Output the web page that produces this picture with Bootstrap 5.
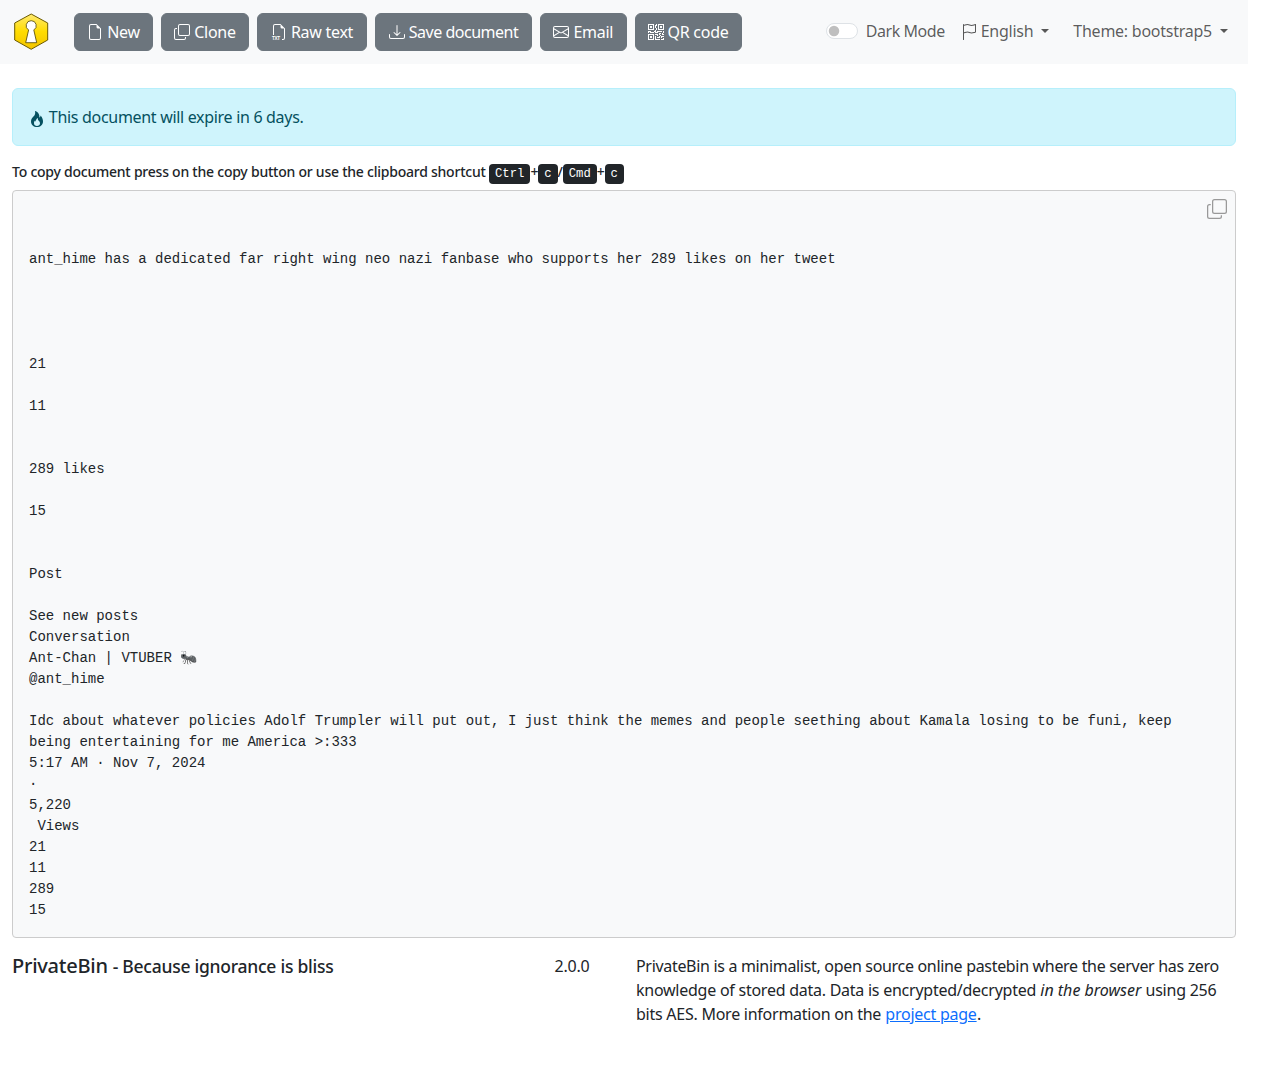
<!doctype html>
<html lang="en"><head><meta charset="utf-8"><title>PrivateBin</title>
<link href="https://cdn.jsdelivr.net/npm/bootstrap@5.3.0/dist/css/bootstrap.min.css" rel="stylesheet">
<style>
body{font-family:"Noto Sans",sans-serif;letter-spacing:-.25px;color:#212529}
.pb-shell{width:1248px}
.pb-nav{height:64px;padding:0 12px 0 14px;background:#f8f9fa}
.pb-logo{width:36px;height:38px;margin-right:24px;display:block}
.pb-actions .btn{height:38px;display:inline-flex;align-items:center;justify-content:center;gap:4px;padding:6px 0;white-space:nowrap;letter-spacing:-.27px}
.pb-actions .pb-tight{letter-spacing:-.48px}
.pb-actions .btn:nth-child(1){width:79px}
.pb-actions .btn:nth-child(2){width:88px}
.pb-actions .btn:nth-child(3){width:110px}
.pb-actions .btn:nth-child(4){width:157px}
.pb-actions .btn:nth-child(5){width:86.5px}
.pb-actions .btn:nth-child(6){width:107px}
.pb-actions svg{width:16px;height:16px;fill:currentColor;flex:none}
.pb-right{color:rgba(0,0,0,.65);margin-top:-2px}
.pb-right .nav-link{color:rgba(0,0,0,.65);padding:8px;white-space:nowrap}
.pb-right .dropdown-toggle::after{margin-left:8px}
.pb-right svg{width:16px;height:16px;fill:currentColor;vertical-align:-3px}
.pb-right .form-check{margin:0 8px 0 0;min-height:24px}
.pb-right .form-check-label{color:rgba(0,0,0,.65);letter-spacing:-.45px}
.pb-gap{margin-left:8px}
.pb-alert{margin:24px 12px 16px;height:58px;padding:16px;background:#cff4fc;border-color:#b6effb;color:#055160;letter-spacing:-.31px}
.pb-alert svg{width:16px;height:16px;fill:currentColor;vertical-align:-4px}
.pb-hint{margin:0 12px 6px;height:22px;font-size:14px;font-weight:500;line-height:20px;white-space:nowrap;color:#212529;letter-spacing:-.235px}
.pb-hint kbd{letter-spacing:0;font-family:"Liberation Mono",monospace}
.pb-paste{margin:0 12px 16px}
.pb-paste pre{margin:0;padding:16px;background:#f8f9fa;border:1px solid #ccc;border-radius:4px;font:14px/21px "Liberation Mono",monospace;letter-spacing:0;white-space:pre-wrap;color:#212529}
.pb-copy{position:absolute;top:9px;right:9px;width:20px;height:20px;fill:#999}
.pb-title{font-size:20px;font-weight:500;line-height:24px;margin:0}
.pb-title small{font-size:17.5px;font-weight:500}
.pb-line1{letter-spacing:-.317px}
footer em{letter-spacing:0;margin:0 .3px}
footer a{margin:0 .3px}
</style></head>
<body>
<div class="pb-shell">
<nav class="navbar navbar-expand pb-nav">
  <svg class="pb-logo" viewBox="0 0 36 38" role="img" aria-label="PrivateBin logo">
    <defs><linearGradient id="pbgold" x1="0" y1="0" x2="0" y2="1"><stop offset="0" stop-color="#ffea70"/><stop offset=".5" stop-color="#ffdc00"/><stop offset="1" stop-color="#f2c400"/></linearGradient></defs>
    <polygon points="17.200,1 33.700,10 33.700,27 17.200,36.300 .7,27 .7,10" fill="url(#pbgold)" stroke="#6b5a00" stroke-width="1"/>
    <path d="M17.200 7.700a5 5 0 0 0-2.600 9.300L11.700 29.700h11L19.800 17a5 5 0 0 0-2.600-9.300z" fill="#fff" stroke="#4a4000" stroke-width=".8"/>
  </svg>
  <div class="d-flex gap-2 pb-actions">
    <button type="button" class="btn btn-secondary"><svg viewBox="0 0 16 16"><path d="M14 4.500V14a2 2 0 0 1-2 2H4a2 2 0 0 1-2-2V2a2 2 0 0 1 2-2h5.500L14 4.500zm-3 0A1.500 1.500 0 0 1 9.500 3V1H4a1 1 0 0 0-1 1v12a1 1 0 0 0 1 1h8a1 1 0 0 0 1-1V4.500h-2z"/></svg>New</button>
    <button type="button" class="btn btn-secondary"><svg viewBox="0 0 16 16"><path d="M4 2a2 2 0 0 1 2-2h8a2 2 0 0 1 2 2v8a2 2 0 0 1-2 2H6a2 2 0 0 1-2-2V2Zm2-1a1 1 0 0 0-1 1v8a1 1 0 0 0 1 1h8a1 1 0 0 0 1-1V2a1 1 0 0 0-1-1H6ZM2 5a1 1 0 0 0-1 1v8a1 1 0 0 0 1 1h8a1 1 0 0 0 1-1v-1h1v1a2 2 0 0 1-2 2H2a2 2 0 0 1-2-2V6a2 2 0 0 1 2-2h1v1H2Z"/></svg>Clone</button>
    <button type="button" class="btn btn-secondary"><svg viewBox="0 0 16 16"><path d="M14 4.500V14a2 2 0 0 1-2 2h-1v-1h1a1 1 0 0 0 1-1V4.500h-2A1.500 1.500 0 0 1 9.500 3V1H4a1 1 0 0 0-1 1v9H2V2a2 2 0 0 1 2-2h5.500L14 4.500Z"/><text x="1" y="15.700" font-size="4.600" font-weight="700" font-family="Liberation Sans,sans-serif" fill="currentColor">TXT</text></svg>Raw text</button>
    <button type="button" class="btn btn-secondary pb-tight"><svg viewBox="0 0 16 16"><path d="M.5 9.900a.5.500 0 0 1 .5.500v2.500a1 1 0 0 0 1 1h12a1 1 0 0 0 1-1v-2.500a.5.500 0 0 1 1 0v2.500a2 2 0 0 1-2 2H2a2 2 0 0 1-2-2v-2.500a.5.500 0 0 1 .5-.500z"/><path d="M7.646 11.854a.5.500 0 0 0 .708 0l3-3a.5.500 0 0 0-.708-.708L8.500 10.293V1.500a.5.500 0 0 0-1 0v8.793L5.354 8.146a.5.500 0 1 0-.708.708l3 3z"/></svg>Save document</button>
    <button type="button" class="btn btn-secondary"><svg viewBox="0 0 16 16"><path d="M0 4a2 2 0 0 1 2-2h12a2 2 0 0 1 2 2v8a2 2 0 0 1-2 2H2a2 2 0 0 1-2-2V4Zm2-1a1 1 0 0 0-1 1v.217l7 4.200 7-4.200V4a1 1 0 0 0-1-1H2Zm13 2.383-4.708 2.825L15 11.105V5.383Zm-.034 6.876-5.640-3.471L8 9.583l-1.326-.795-5.640 3.470A1 1 0 0 0 2 13h12a1 1 0 0 0 .966-.741ZM1 11.105l4.708-2.897L1 5.383v5.722Z"/></svg>Email</button>
    <button type="button" class="btn btn-secondary"><svg viewBox="0 0 16 16"><path d="M2 2h2v2H2V2Z"/><path d="M6 0v6H0V0h6ZM5 1H1v4h4V1ZM4 12H2v2h2v-2Z"/><path d="M6 10v6H0v-6h6Zm-5 1v4h4v-4H1Zm11-9h2v2h-2V2Z"/><path d="M10 0v6h6V0h-6Zm5 1v4h-4V1h4ZM8 1V0h1v2H8v2H7V1h1Zm0 5V4h1v2H8ZM6 8V7h1V6h1v2h1V7h5v1h-4v1H7V8H6Zm0 0v1H2V8H1v1H0V7h3v1h3Zm10 1h-1V7h1v2Zm-1 0h-1v2h2v-1h-1V9Zm-4 0h2v1h-1v1h-1V9Zm2 3v-1h-1v1h-1v1H9v1h3v-2h1Zm0 0h3v1h-2v1h-1v-2Zm-4-1v1h1v-2H7v1h2Z"/><path d="M7 12h1v3h4v1H7v-4Zm9 2v2h-3v-1h2v-1h1Z"/></svg>QR code</button>
  </div>
  <div class="ms-auto d-flex align-items-center pb-right">
    <div class="form-check form-switch"><input class="form-check-input" type="checkbox" id="pbdark"><label class="form-check-label" for="pbdark">Dark Mode</label></div>
    <div class="nav-item dropdown"><a class="nav-link dropdown-toggle" href="#" role="button"><svg viewBox="0 0 16 16"><path d="M14.778.085A.5.500 0 0 1 15 .5V8a.5.500 0 0 1-.314.464L14.500 8l.186.464-.003.001-.006.003-.023.009a12.435 12.435 0 0 1-.397.150c-.264.095-.631.223-1.047.350-.816.252-1.879.523-2.710.523-.847 0-1.548-.280-2.158-.525l-.028-.010C7.680 8.710 7.140 8.500 6.500 8.500c-.7 0-1.638.230-2.437.477A19.626 19.626 0 0 0 3 9.342V15.500a.5.500 0 0 1-1 0V.5a.5.500 0 0 1 1 0v.282c.226-.079.496-.170.790-.260C4.606.272 5.670 0 6.500 0c.840 0 1.524.277 2.121.519l.043.018C9.286.788 9.828 1 10.500 1c.7 0 1.638-.230 2.437-.477a19.587 19.587 0 0 0 1.349-.476l.019-.007.004-.002h.001M14 1.221c-.220.078-.480.167-.766.255-.810.252-1.872.523-2.734.523-.886 0-1.592-.286-2.203-.534l-.008-.003C7.662 1.210 7.139 1 6.500 1c-.669 0-1.606.229-2.415.478A21.294 21.294 0 0 0 3 1.845v6.433c.220-.078.480-.167.766-.255C4.576 7.770 5.638 7.500 6.500 7.500c.847 0 1.548.280 2.158.525l.028.010C9.320 8.290 9.860 8.500 10.500 8.500c.668 0 1.606-.229 2.415-.478A21.317 21.317 0 0 0 14 7.655V1.222z"/></svg> English</a></div>
    <div class="nav-item dropdown pb-gap"><a class="nav-link dropdown-toggle" href="#" role="button">Theme: bootstrap5</a></div>
  </div>
</nav>
<div class="alert pb-alert" role="alert"><svg viewBox="0 0 16 16"><path d="M8 16c3.314 0 6-2 6-5.500 0-1.500-.5-4-2.500-6 .25 1.500-1.250 2-1.250 2C11 4 9 .5 6 0c.357 2 .5 4-2 6-1.250 1-2 2.729-2 4.500C2 14 4.686 16 8 16Zm0-1c-1.657 0-3-1-3-2.750 0-.75.25-2 1.250-3C6.125 10 7 10.500 7 10.500c-.375-1.250.5-3.250 2-3.500-.179 1-.25 2 1 3 .625.5 1 1.364 1 2.250C11 14 9.657 15 8 15Z"/></svg> This document will expire in 6 days.</div>
<div class="pb-hint">To copy document press on the copy button or use the clipboard shortcut <kbd>Ctrl</kbd>+<kbd>c</kbd>/<kbd>Cmd</kbd>+<kbd>c</kbd></div>
<div class="position-relative pb-paste">
<svg class="pb-copy" viewBox="0 0 16 16"><path d="M4 2a2 2 0 0 1 2-2h8a2 2 0 0 1 2 2v8a2 2 0 0 1-2 2H6a2 2 0 0 1-2-2V2Zm2-1a1 1 0 0 0-1 1v8a1 1 0 0 0 1 1h8a1 1 0 0 0 1-1V2a1 1 0 0 0-1-1H6ZM2 5a1 1 0 0 0-1 1v8a1 1 0 0 0 1 1h8a1 1 0 0 0 1-1v-1h1v1a2 2 0 0 1-2 2H2a2 2 0 0 1-2-2V6a2 2 0 0 1 2-2h1v1H2Z"/></svg>
<pre>


ant_hime has a dedicated far right wing neo nazi fanbase who supports her 289 likes on her tweet




21

11


289 likes

15


Post

See new posts
Conversation
Ant-Chan | VTUBER 🐜
@ant_hime

Idc about whatever policies Adolf Trumpler will put out, I just think the memes and people seething about Kamala losing to be funi, keep being entertaining for me America &gt;:333
5:17 AM · Nov 7, 2024
·
5,220
 Views
21
11
289
15</pre>
</div>
<footer class="container-fluid">
  <div class="row">
    <div class="col-5"><h4 class="pb-title">PrivateBin <small>- Because ignorance is bliss</small></h4></div>
    <div class="col-1 text-center">2.0.0</div>
    <div class="col-6"><span class="pb-line1">PrivateBin is a minimalist, open source online pastebin where the server has zero</span> knowledge of stored data. Data is encrypted/decrypted <em>in the browser</em> using 256 bits AES. More information on the <a href="#">project page</a>.</div>
  </div>
</footer>
</div>
</body></html>
